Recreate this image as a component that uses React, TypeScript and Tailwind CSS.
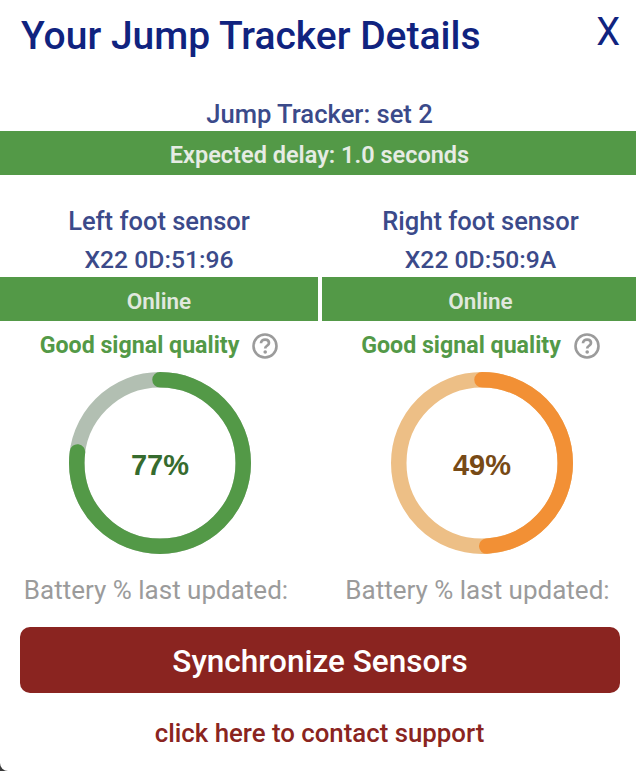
function Ring({ pct, color, track, textColor }: { pct: number; color: string; track: string; textColor: string }) {
  const r = 83.25
  const circ = 2 * Math.PI * r
  return (
    <div className="relative w-[182px] h-[182px]">
      <svg width="182" height="182" viewBox="0 0 182 182">
        <circle cx="91" cy="91" r={r} fill="none" stroke={track} strokeWidth="15.5" />
        <circle
          cx="91"
          cy="91"
          r={r}
          fill="none"
          stroke={color}
          strokeWidth="15.5"
          strokeLinecap="round"
          strokeDasharray={`${(circ * pct) / 100} ${circ}`}
          transform="rotate(-90 91 91)"
        />
      </svg>
      <div
        className="absolute inset-0 flex items-center justify-center pt-[5px] text-[29px] font-bold font-['Liberation_Sans',sans-serif]"
        style={{ color: textColor }}
      >
        {pct}%
      </div>
    </div>
  )
}

function HelpIcon() {
  return (
    <svg width="26" height="26" viewBox="0 0 26 26" fill="none">
      <circle cx="13" cy="13" r="11.5" stroke="#9b9b9b" strokeWidth="2.6" />
      <path d="M9 10.3c0-2.4 1.8-3.7 4.1-3.7s3.9 1.4 3.9 3.4c0 2.7-3.8 2.8-3.8 5.4" stroke="#9b9b9b" strokeWidth="2.7" />
      <circle cx="13.2" cy="19" r="1.8" fill="#9b9b9b" />
    </svg>
  )
}

type Sensor = {
  name: string
  mac: string
  pct: number
  color: string
  track: string
  textColor: string
  column: string
  shift: string
  ring: string
  battery: string
}

const sensors: Sensor[] = [
  { name: 'Left foot sensor', mac: 'X22 0D:51:96', pct: 77, color: '#539947', track: '#b2bfb2', textColor: '#366b2e', column: 'w-[318px]', shift: 'ml-0', ring: 'ml-[2px]', battery: '-ml-[6px]' },
  { name: 'Right foot sensor', mac: 'X22 0D:50:9A', pct: 49, color: '#f29035', track: '#edbf86', textColor: '#774a16', column: 'w-[314px]', shift: 'ml-[3px]', ring: 'ml-[6px]', battery: '-ml-[3px]' },
]

export default function App() {
  return (
    <div className="w-[636px] h-[771px] bg-[#3a3a3a] overflow-hidden">
      <div className="h-full bg-white rounded-bl-[8px] font-['Roboto',sans-serif]">
        {/* Header */}
        <div className="flex items-start justify-between pl-[21px] pr-[16px] pt-[12px] h-[98px]">
          <h1 className="text-[39px] leading-[48px] font-medium text-[#10237f]">Your Jump Tracker Details</h1>
          <button className="text-[38px] leading-[40px] text-[#10237f]">X</button>
        </div>

        <p className="pl-[3px] text-center text-[25.6px] leading-[33px] font-medium text-[#3b4a8a]">Jump Tracker: set 2</p>
        <div className="h-[44px] bg-[#539947] flex items-center justify-center pt-[6px] pl-[3px] text-[23.5px] font-semibold text-[#e6ece4]">
          Expected delay: 1.0 seconds
        </div>

        {/* Sensors */}
        <div className="flex gap-[4px] pt-[26px]">
          {sensors.map(s => (
            <div key={s.name} className={`${s.column} flex flex-col items-center`}>
              <p className={`${s.shift} text-[25.5px] leading-[40px] font-medium text-[#3b4a8a]`}>{s.name}</p>
              <p className={`${s.shift} pt-[1px] h-[36px] text-[24.7px] leading-[36px] font-medium text-[#3b4a8a]`}>{s.mac}</p>
              <div className="w-full h-[44px] bg-[#539947] flex items-center justify-center pt-[6px] text-[22.5px] font-semibold text-[#e0e8de]">
                <span className={s.shift}>Online</span>
              </div>
              <div className={`${s.shift} flex items-center gap-[13px] h-[51px] pb-[2px]`}>
                <span className="text-[23.2px] font-bold text-[#539947]">Good signal quality</span>
                <HelpIcon />
              </div>
              <div className={s.ring}>
                <Ring pct={s.pct} color={s.color} track={s.track} textColor={s.textColor} />
              </div>
              <p className={`${s.battery} mt-[20px] text-[26px] leading-[32px] text-[#9b9b9b]`}>Battery % last updated:</p>
            </div>
          ))}
        </div>

        {/* Actions */}
        <div className="pl-[20px] pr-[16px] pt-[21px]">
          <button className="w-full h-[66px] pt-[3px] rounded-[10px] bg-[#8a2420] text-white text-[31.5px] font-medium">
            Synchronize Sensors
          </button>
        </div>
        <p className="mt-[22px] pl-[3px] text-center text-[25.8px] leading-[36px] font-medium text-[#8a2420]">click here to contact support</p>
      </div>
    </div>
  )
}
